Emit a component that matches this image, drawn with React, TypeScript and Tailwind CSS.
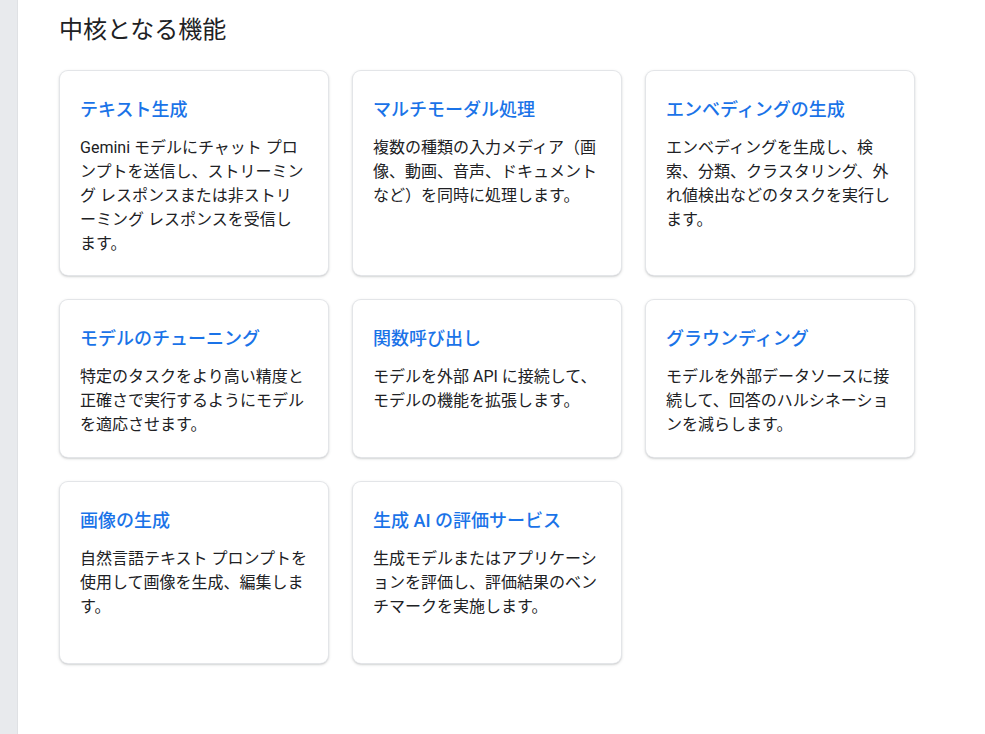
import React from "react";

const cards: { title: string; body: React.ReactNode }[] = [
  {
    title: "テキスト生成",
    body: (
      <>
        Gemini モデルにチャット プロンプトを送信し、ストリーミング レスポンスまたは非ストリ
        <br />
        ーミング レスポンスを受信し
        <br />
        ます。
      </>
    ),
  },
  {
    title: "マルチモーダル処理",
    body: "複数の種類の入力メディア（画像、動画、音声、ドキュメントなど）を同時に処理します。",
  },
  {
    title: "エンベディングの生成",
    body: "エンベディングを生成し、検索、分類、クラスタリング、外れ値検出などのタスクを実行します。",
  },
  {
    title: "モデルのチューニング",
    body: "特定のタスクをより高い精度と正確さで実行するようにモデルを適応させます。",
  },
  {
    title: "関数呼び出し",
    body: "モデルを外部 API に接続して、モデルの機能を拡張します。",
  },
  {
    title: "グラウンディング",
    body: "モデルを外部データソースに接続して、回答のハルシネーションを減らします。",
  },
  {
    title: "画像の生成",
    body: "自然言語テキスト プロンプトを使用して画像を生成、編集します。",
  },
  {
    title: "生成 AI の評価サービス",
    body: "生成モデルまたはアプリケーションを評価し、評価結果のベンチマークを実施します。",
  },
];

export default function App() {
  return (
    <div
      lang="ja"
      className="flex min-h-[734px] w-full bg-white"
      style={{ fontFamily: 'Roboto, "Noto Sans CJK JP", sans-serif' }}
    >
      <div className="w-[18px] shrink-0 border-r border-[#dfe1e4] bg-[#e8eaed]" />
      <main className="flex-1 pl-[42px] pt-[13px]">
        <h2 className="-ml-[1px] text-[24px] leading-[34px] font-normal text-[#202124]">
          中核となる機能
        </h2>
        <div className="mt-[24px] grid grid-cols-[268px_268px_268px] grid-rows-[204px_157px_181px] gap-x-[25px] gap-y-[25px]">
          {cards.map((c) => (
            <div
              key={c.title}
              className="rounded-[8px] bg-white px-[20px] pt-[25px] pb-[19px] shadow-[0_0_0_1px_#e3e5e8,0_1px_2px_0_rgba(60,64,67,0.3),0_1px_3px_1px_rgba(60,64,67,0.15)]"
            >
              <h3 className="text-[18px] leading-[28px] font-medium text-[#1a73e8]">
                {c.title}
              </h3>
              <p className="mt-[12px] text-[16px] leading-[24px] text-[#202124]">
                {c.body}
              </p>
            </div>
          ))}
        </div>
      </main>
    </div>
  );
}
